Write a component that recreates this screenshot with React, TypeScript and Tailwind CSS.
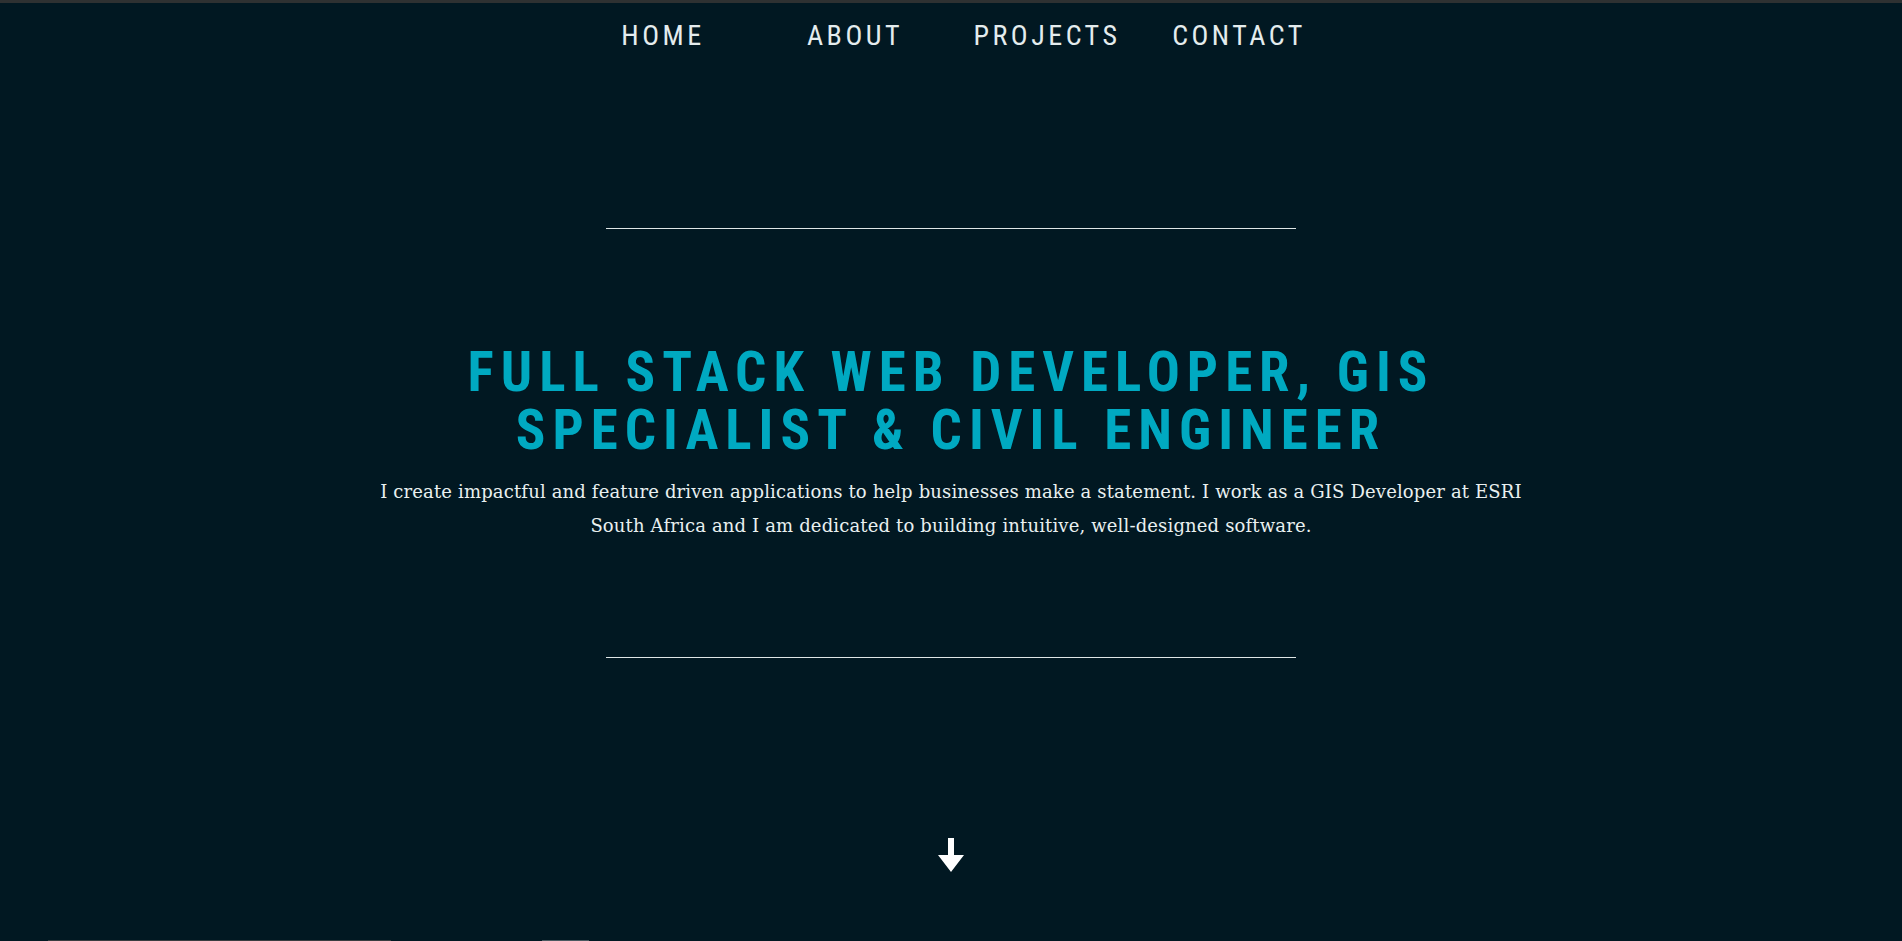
import React from 'react';

const navItems = ['HOME', 'ABOUT', 'PROJECTS', 'CONTACT'];

const ArrowDown = () => (
  <svg width="26" height="34" viewBox="0 0 26 34" fill="#ffffff" xmlns="http://www.w3.org/2000/svg">
    <path d="M10 0h6v17h10L13 34 0 17h10z" />
  </svg>
);

const App = () => {
  return (
    <div className="min-h-screen bg-[#011822] overflow-hidden">
      {/* thin top strip */}
      <div className="h-[3px] bg-[#2e3132]" />

      {/* Nav */}
      <header className="pt-[19px]">
        <nav className="flex justify-center">
          {navItems.map((item) => (
            <a
              key={item}
              href="#"
              className="w-[192px] text-center text-[28px] leading-[28px] tracking-[3.5px] text-[#e4ecee] [font-family:'Roboto_Condensed',Roboto,sans-serif] [font-stretch:condensed]"
            >
              {item}
            </a>
          ))}
        </nav>
      </header>

      {/* Hero */}
      <section className="flex flex-col items-center">
        <div className="mt-[178px] h-px w-[690px] bg-[#dfe6e6]" />

        <h1 className="mt-[114px] text-center text-[55px] leading-[58px] font-bold tracking-[7px] text-[#00a9c1] [font-family:'Roboto_Condensed',Roboto,sans-serif] [font-stretch:condensed]">
          FULL STACK WEB DEVELOPER, GIS
          <br />
          SPECIALIST &amp; CIVIL ENGINEER
        </h1>

        <p className="mt-[16px] max-w-[1170px] text-center text-[18px] leading-[34px] tracking-[0.15px] text-[#e9f0f0] [font-family:'DejaVu_Serif',serif]">
          I create impactful and feature driven applications to help businesses make a statement. I work as a GIS Developer at ESRI South Africa and I am dedicated to building intuitive, well-designed software.
        </p>

        <div className="mt-[114px] h-px w-[690px] bg-[#dfe6e6]" />

        <a href="#about" className="mt-[180px]">
          <ArrowDown />
        </a>
      </section>

      {/* top edge of the next section */}
      <div className="mt-[68px] flex h-px">
        <div className="ml-[48px] w-[343px] bg-[#393e41]" />
        <div className="ml-[151px] w-[47px] bg-[#4b5a61]" />
      </div>
    </div>
  );
};

export default App;
